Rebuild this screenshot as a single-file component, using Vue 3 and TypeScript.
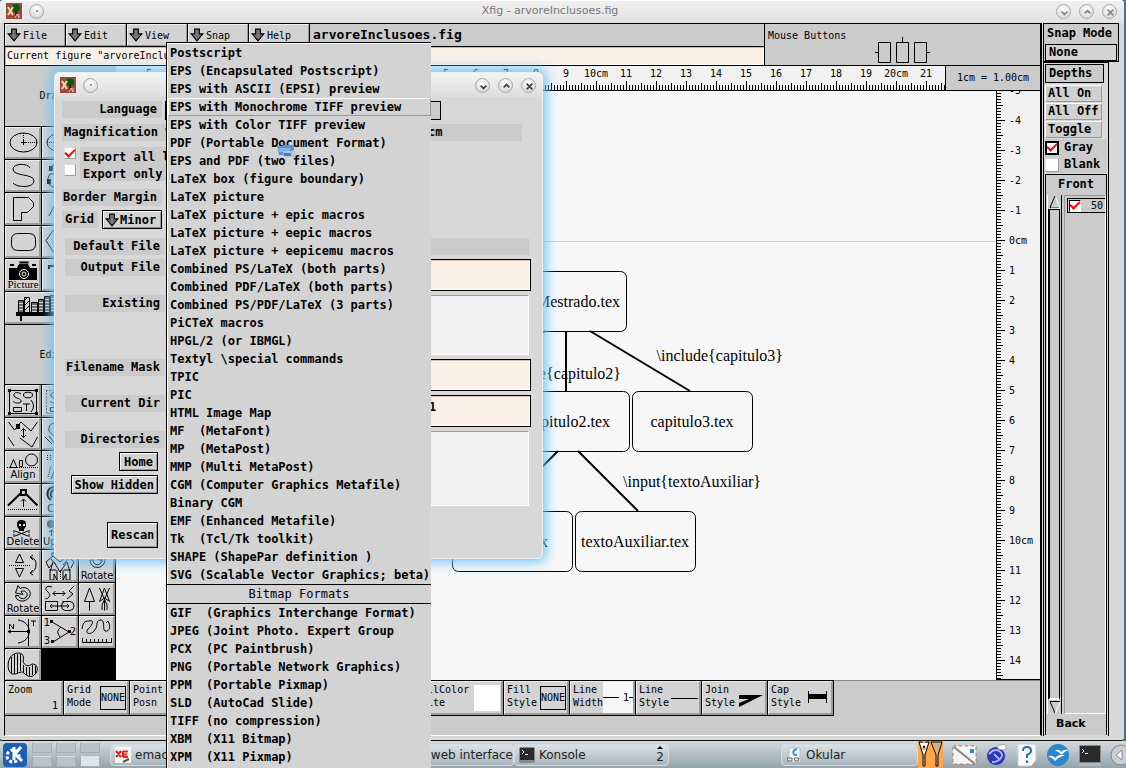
<script setup lang="ts">
import { ref } from 'vue'

interface Stroke { d: string; fill?: string; stroke?: string; dash?: string; w?: number }
interface Label { t: string; x: number; y: number; serif?: boolean; size?: number }
interface Tool { name: string; p: Stroke[]; l?: Label[]; wide?: boolean }

const menus = ['File', 'Edit', 'View', 'Snap', 'Help']

const vectorFormats = [
  'Postscript', 'EPS (Encapsulated Postscript)', 'EPS with ASCII (EPSI) preview',
  'EPS with Monochrome TIFF preview', 'EPS with Color TIFF preview',
  'PDF (Portable Document Format)', 'EPS and PDF (two files)', 'LaTeX box (figure boundary)',
  'LaTeX picture', 'LaTeX picture + epic macros', 'LaTeX picture + eepic macros',
  'LaTeX picture + eepicemu macros', 'Combined PS/LaTeX (both parts)',
  'Combined PDF/LaTeX (both parts)', 'Combined PS/PDF/LaTeX (3 parts)', 'PiCTeX macros',
  'HPGL/2 (or IBMGL)', 'Textyl \\special commands', 'TPIC', 'PIC', 'HTML Image Map',
  'MF  (MetaFont)', 'MP  (MetaPost)', 'MMP (Multi MetaPost)',
  'CGM (Computer Graphics Metafile)', 'Binary CGM', 'EMF (Enhanced Metafile)',
  'Tk  (Tcl/Tk toolkit)', 'SHAPE (ShapePar definition )', 'SVG (Scalable Vector Graphics; beta)',
]
const bitmapFormats = [
  'GIF  (Graphics Interchange Format)', 'JPEG (Joint Photo. Expert Group', 'PCX  (PC Paintbrush)',
  'PNG  (Portable Network Graphics)', 'PPM  (Portable Pixmap)', 'SLD  (AutoCad Slide)',
  'TIFF (no compression)', 'XBM  (X11 Bitmap)', 'XPM  (X11 Pixmap)',
]
const hovered = ref('EPS with Monochrome TIFF preview')

const drawTools: Tool[] = [
  { name: 'Ellipse by radius', p: [{ d: 'M5 15.5a13.5 9.5 0 1 0 27 0a13.5 9.5 0 1 0 -27 0' }, { d: 'M18.5 6V15.5H32', dash: '1 1' }, { d: 'M16 15.5H21M18.5 13V18' }] },
  { name: 'Ellipse by diameter', p: [{ d: 'M5 15.5a13.5 9.5 0 1 0 27 0a13.5 9.5 0 1 0 -27 0' }, { d: 'M5 15.5H32', dash: '1 1' }] },
  { name: 'Circle', p: [] },
  { name: 'Spline', p: [{ d: 'M25 8C23 3 8 3 8 9C8 17 29 13 29 21C29 28 12 28 8 23' }] },
  { name: 'Closed spline', p: [{ d: 'M8 8C12 2 20 4 24 8C28 14 12 14 8 14C4 20 6 26 12 27' }, { d: 'M7 6h4v5h-4zM5 19h4v5h-4z', fill: '#000' }] },
  { name: 'Interpolated spline', p: [] },
  { name: 'Polygon', p: [{ d: 'M8.5 4.5V27.5H16.5V19.5H22.5L28.5 13.5V9.5L23.5 4.5Z' }] },
  { name: 'Polyline', p: [{ d: 'M7 23L16 6L24 20L30 8' }] },
  { name: 'Box', p: [] },
  { name: 'Rounded box', p: [{ d: 'M12.5 7.5H24.5Q30.5 8 30.5 13.5V18.5Q30.5 24 24.5 24.5H12.5Q6.5 24 6.5 18.5V13.5Q6.5 8 12.5 7.5Z' }] },
  { name: 'Regular polygon', p: [{ d: 'M4 14.5L11 4.5H25L32 14.5L25 25.5H11Z' }] },
  { name: 'Arc', p: [] },
  { name: 'Picture', p: [{ d: 'M4 21V9H12L14 5H23L25 9H32V21ZM5 5h4v2h-4zM27 5h4v2h-4z', fill: '#000' }, { d: 'M14.5 3.5h9', w: 2 }, { d: 'M14.5 15a4.5 4.5 0 1 0 9 0a4.5 4.5 0 1 0 -9 0M17 15a2 2 0 1 0 4 0a2 2 0 1 0 -4 0', stroke: '#fff' }], l: [{ t: 'Picture', x: 18, y: 29, serif: true, size: 11 }] },
  { name: 'Text', p: [{ d: 'M7 10V7H26V10M16.5 7V24', w: 2 }] },
  { name: 'Dimension', p: [] },
  {
    name: 'Library', wide: true, p: [
      { d: 'M11 20h66v4h-66zM15 24h2v5h-2zM68 24h2v5h-2z', fill: '#000' },
      { d: 'M13.5 8.5h5v12h-5zM19.5 5.5h5v15h-5zM26.5 10.5h6v10h-6zM33.5 7.5h5v13h-5zM39.5 4.5h5v16h-5zM45.5 3.5h5v17h-5zM52.5 8.5h6v12h-6zM60.5 6.5h5v14h-5z' },
      { d: 'M15 9v12M17 9v12M27 11v10M29 11v10M31 11v10M35 8v13M37 8v13M41 5v15M43 5v15M47 4v16M49 4v16', w: 1, dash: '2 1' },
      { d: 'M20 18l4 -4M20 13l4 -4M20 8l3 -3' },
    ],
  },
]

const editTools: Tool[] = [
  { name: 'Compound', p: [{ d: 'M4.5 5.5H31.5V28.5H4.5Z' }, { d: 'M3 4h3v3h-3zM30 4h3v3h-3zM3 27h3v3h-3zM30 27h3v3h-3z', fill: '#000' }, { d: 'M16 9C12 6 8 8 9 11C11 14 17 13 16 17C14 19 9 18 8 16M18.5 10a4 2.5 0 1 0 9 0a4 2.5 0 1 0 -9 0M8.5 22.5h8v4h-8zM18 19h7M21.5 19v7M26 15q5 6 0 12' }] },
  { name: 'Open compound', p: [{ d: 'M4.5 5.5H31.5V28.5H4.5Z', dash: '1 2' }, { d: 'M16 9C12 6 8 8 9 11C11 14 17 13 16 17C14 19 9 18 8 16M8.5 22.5h8v4h-8z' }] },
  { name: 'Join', p: [] },
  { name: 'Move point', p: [{ d: 'M3.5 4L9.5 12L13 8L16 4L26 13L32.5 4M3 19L9 28M15 20L27 29L32.5 19M18.5 11V19M16 13L18.5 10.5L21 13M16 17L18.5 19.5L21 17' }, { d: 'M11 6h4v5h-4z', fill: '#000' }] },
  { name: 'Move', p: [{ d: 'M15 6C8 4 7 8 7 12C7 14 10 17 13 18M3 19L10 26M7 18L13 26' }] },
  { name: 'Copy objects', p: [] },
  { name: 'Align', p: [{ d: 'M5 16.5L8.5 8.5L12 16.5ZM14.5 9.5h3v6h-3zM20.5 9a6 6 0 1 0 12 0a6 6 0 1 0 -12 0' }, { d: 'M2 16.5H34', dash: '1 1' }], l: [{ t: 'Align', x: 18, y: 27 }] },
  { name: 'Move shape', p: [{ d: 'M5.5 4V10M8.5 4V10M6 26L9 15', dash: '1 1' }, { d: 'M9 28L14 16' }] },
  { name: 'Distribute', p: [] },
  { name: 'Add point', p: [{ d: 'M3 21.5L16 9M20 9L32.5 21.5M16 6h5v5h-5z', w: 2 }, { d: 'M18.5 15V23M16 17.5L18.5 15L21 17.5' }, { d: 'M3 25.5H33', dash: '1 1' }] },
  { name: 'Copy', p: [{ d: 'M12 3C4 4 4 13 9 16M12 6C8 7 8 12 10 14', w: 2 }], l: [{ t: 'Copy', x: 18, y: 28 }] },
  { name: 'Arrow', p: [] },
  { name: 'Delete', p: [{ d: 'M12 7q0 -4 4.5 -4t4.5 4q0 4 -2 5v2h-5v-2q-2 -1 -2 -5', fill: '#000' }, { d: 'M14 8h2M18 8h2', stroke: '#ddd', w: 2 }, { d: 'M10 14L23 19M23 14L10 19M9 13v3M24 13v3M9 17v3M24 17v3', w: 1 }], l: [{ t: 'Delete', x: 18, y: 28 }] },
  { name: 'Update', p: [{ d: 'M5 7a3 3 0 1 0 8 0a3 3 0 1 0 -8 0', fill: '#555' }, { d: 'M9.5 13V19M7 15L9.5 13L12 15' }], l: [{ t: 'Update', x: 19, y: 28 }] },
  { name: 'Text edit', p: [] },
  { name: 'Flip vertically', p: [{ d: 'M10.5 12.5L14.5 4L18.5 12.5ZM10.5 18.5L14.5 27L18.5 18.5Z' }, { d: 'M4 15.5H25', dash: '1 1' }, { d: 'M25 7Q32 9 31 15Q31 21 25 23M28 5L25 7L28 10M28 20L25 23L28 25' }] },
  { name: 'Flip horizontally', p: [{ d: 'M4 12L11 6L18 12L25 6L32 12L29 18M4 12L7 18L11 13M10 6V3h5v3M23 6V3h5v3M11 12L8 22V30H12V24L15 30V20M25 12L28 22V30H24V24L21 30V20M12 12L18 22L25 12M7 20H14M22 20H29M9 9l5 6M26 9l-5 6' }, { d: 'M18.5 20V31', dash: '1 1' }] },
  { name: 'Rotate clockwise', p: [{ d: 'M18 2.5C26 2 28 10 24 15C19 20 11 17 11 10L14 10C14 15 19 16 22 13C24 10 22 6 18 6.500' }, { d: 'M23 4V11L17 8' }], l: [{ t: 'Rotate', x: 18, y: 29 }] },
  { name: 'Rotate counter-clockwise', p: [{ d: 'M15 5.500C22 2 28 9 24 14.500C20 20 11 19 10.500 12.500H13.500C14 16 20 17 22 13C23 9 19 7 16 8.500L18 11.500L10.500 10L13 2.500Z' }], l: [{ t: 'Rotate', x: 18, y: 29 }] },
  { name: 'Convert', p: [{ d: 'M10 4C5 2 2 5 5 8C8 11 9 12 6 15C5 16 4 16 3 15M32 3L27 8L31 11L25 16M11 10.5H23M13.5 8L11 10.5L13.5 13M20.5 8L23 10.5L20.5 13M3.5 18.5H15.5V27.5H3.5ZM20.5 18.5H28Q32 19 32 23T28 27.5H23Q19.5 27 19.5 23T23 18.5M8 23H27M10 21L8 23L10 25M25 21L27 23L25 25' }] },
  { name: 'Arrow heads', p: [{ d: 'M5.5 18.5L10.5 5L15.5 18.5ZM10.5 18.5V27.5M20.5 18.5L25.5 5L30.5 18.5L25.5 15ZM20.5 5L28 22V27M30.5 5L23 22V27M25.5 15V27.5' }] },
  { name: 'Tangent', p: [{ d: 'M13 4C28 6 28 25 13 27M23.5 3V30M3 15.5H23M4.5 13V8L8.5 13V8M26 5H31M28.5 5V10M3 15.5L6 14M3 15.5L6 17' }, { d: 'M22 14h3v3h-3z', fill: '#000' }] },
  { name: 'Angle', p: [{ d: 'M10 6L27 16L11 26M19 11Q13 15 18 21' }, { d: 'M8 4h3v3h-3zM26 14h3v3h-3zM9 24h3v3h-3z', fill: '#000' }], l: [{ t: '1', x: 5, y: 10 }, { t: '2', x: 31, y: 19 }, { t: '3', x: 5, y: 28 }] },
  { name: 'Length', p: [{ d: 'M3 13C4 7 5 5 10 5C16 3 13 10 9 13C5 18 12 19 15 15C20 10 16 5 21 4C27 3 23 14 26 15C31 16 32 10 29 5L27 7M3.5 22V26.5H32.5V22M7.5 23V26M11.5 23V26M15.5 23V26M19.5 23V26M23.5 23V26M27.5 23V26' }] },
  { name: 'Area', p: [{ d: 'M7 25C1 22 2 8 9 5C16 2 20 6 18 12C19 17 24 18 27 15C32 15 33 19 32 22C29 30 22 28 19 24C16 21 12 26 7 25Z' }, { d: 'M6.5 8V24M9.5 5V25M12.5 5V24M15.5 5V22M18.5 16V23M21.5 18V26M24.5 18V27M27.5 16V26M30.5 17V25' }] },
]

function ticks(count: number, start: number, draw: (pos: number, len: number) => string): string {
  let d = ''
  for (let i = -count; i <= count; i++) {
    const len = i % 10 === 0 ? 9 : i % 5 === 0 ? 7 : 5
    d += draw(start + i * 3, len)
  }
  return d
}
const range = (a: number, b: number) => Array.from({ length: b - a + 1 }, (_, i) => a + i)
const cm = (n: number) => (n % 10 === 0 ? n + 'cm' : String(n))
const topTicks = ticks(600, 180, (x, l) => `M${x}.5 ${24 - l}V24`)
const sideTicks = ticks(400, 149, (y, l) => `M0 ${y}.5H${l}`)

const exportAll = ref(true)
const exportOnly = ref(false)
const gray = ref(true)
const blank = ref(false)
const depth50 = ref(true)
</script>

<template>
  <div class="desktop">
    <main class="window">
      <header class="titlebar">
        <svg class="appicon" viewBox="0 0 16 16"><rect width="16" height="16" fill="#9a4a3a" /><circle cx="10" cy="5" r="4" fill="#0a5a14" /><path d="M10 8v5" stroke="#321" stroke-width="2" /><path d="M2 4l5 8M7 4L2 12" stroke="#f3d9a0" stroke-width="2" /><path d="M9 15l2-4 2 4M13 11v4" stroke="#e8b8b8" fill="none" /></svg>
        <button class="orb" aria-label="Window menu"><i class="dot"></i></button>
        <h1>Xfig - arvoreInclusoes.fig</h1>
        <button v-for="(d, i) in ['M5 7L8 10L11 7', 'M5 9L8 6L11 9', 'M5 5L11 11M11 5L5 11']" :key="i" class="orb ctl" :aria-label="['Minimize', 'Maximize', 'Close'][i]">
          <svg viewBox="0 0 16 16"><path :d="d" /></svg>
        </button>
      </header>

      <div class="body">
        <section class="left">
          <div class="top">
            <div class="topleft">
              <nav class="menubar">
                <button v-for="m in menus" :key="m" class="raised">
                  <svg class="arrow" viewBox="0 0 12 12"><path d="M4 1H8V5H11L6 11L1 5H4Z" /></svg>{{ m }}
                </button>
                <span class="filename">arvoreInclusoes.fig</span>
              </nav>
              <div class="message">Current figure "arvoreInclusoes.fig"</div>
            </div>
            <div class="mouse">
              <span>Mouse Buttons</span>
              <svg width="57" height="26" viewBox="0 0 57 26"><path d="M4.500 5.500h12v20h-12zM22.500 5.500h12v20h-12zM40.500 5.500h12v20h-12zM28.500 0v5M1 15.500h3M53 15.500h3" /></svg>
            </div>
          </div>

          <div class="middle">
            <aside class="tools">
              <div class="heading drawing">Drawing</div>
              <div class="grid">
                <button v-for="t in drawTools" :key="t.name" class="tool raised" :class="{ wide: t.wide }" :aria-label="t.name">
                  <svg :width="t.wide ? 108 : 36" height="32">
                    <path v-for="(s, i) in t.p" :key="i" :d="s.d" :fill="s.fill || 'none'" :stroke="s.fill ? 'none' : s.stroke || '#000'" :stroke-dasharray="s.dash" :stroke-width="s.w || 1" />
                    <text v-for="l in t.l" :key="l.t" :x="l.x" :y="l.y" :class="{ serif: l.serif }" :font-size="l.size || 10" text-anchor="middle">{{ l.t }}</text>
                  </svg>
                </button>
              </div>
              <div class="heading editing">Editing</div>
              <div class="grid">
                <button v-for="t in editTools" :key="t.name" class="tool raised" :aria-label="t.name">
                  <svg width="36" height="32">
                    <path v-for="(s, i) in t.p" :key="i" :d="s.d" :fill="s.fill || 'none'" :stroke="s.fill ? 'none' : s.stroke || '#000'" :stroke-dasharray="s.dash" :stroke-width="s.w || 1" />
                    <text v-for="l in t.l" :key="l.t" :x="l.x" :y="l.y" :font-size="l.size || 10" text-anchor="middle">{{ l.t }}</text>
                  </svg>
                </button>
              </div>
            </aside>

            <div class="drawarea">
              <div class="rulerrow">
                <svg class="ruler">
                  <path :d="topTicks" />
                  <text v-for="n in range(-5, 21)" :key="n" :x="180 + n * 30" y="11" text-anchor="middle">{{ cm(n) }}</text>
                </svg>
                <div class="unit">1cm = 1.00cm</div>
              </div>
              <div class="canvasrow">
                <svg class="canvas">
                  <g transform="translate(-116 -91)">
                    <path d="M116 241.500H4000" class="axis" />
                    <g class="boxes">
                      <rect x="506.500" y="271.500" width="120" height="60" rx="6" />
                      <rect x="509.500" y="391.500" width="120" height="60" rx="6" />
                      <rect x="632.500" y="391.500" width="120" height="60" rx="6" />
                      <rect x="452.500" y="511.500" width="120" height="60" rx="6" />
                      <rect x="575.500" y="511.500" width="120" height="60" rx="6" />
                    </g>
                    <path class="edges" d="M566 331V391M590 331L690 391M545 331L445 391M558 451L498 511M578 451L638 511" />
                    <text x="620" y="307" text-anchor="end">Mestrado.tex</text>
                    <text x="783" y="361" text-anchor="end">\include{capitulo3}</text>
                    <text x="621" y="379" text-anchor="end">\include{capitulo2}</text>
                    <text x="610" y="427" text-anchor="end">capitulo2.tex</text>
                    <text x="692" y="427" text-anchor="middle">capitulo3.tex</text>
                    <text x="761" y="487" text-anchor="end">\input{textoAuxiliar}</text>
                    <text x="548" y="547" text-anchor="end">texto.tex</text>
                    <text x="635" y="547" text-anchor="middle">textoAuxiliar.tex</text>
                  </g>
                </svg>
                <svg class="side">
                  <path :d="sideTicks + 'M0.5 0V4000'" />
                  <text v-for="n in range(-5, 14)" :key="n" x="13" :y="153 + n * 30">{{ cm(n) }}</text>
                </svg>
              </div>
            </div>
          </div>

          <footer class="indicators">
            <button class="ind zoom raised"><span>Zoom</span><span class="val">1</span></button>
            <button class="ind raised"><span>Grid<br />Mode</span><b class="none">NONE</b></button>
            <button class="ind raised"><span>Point<br />Posn</span><svg width="26" height="26"><path d="M2 2.500h6M2 6.500h4M2 10.500h4M2 14.500h4M2 18.500h4M2 22.500h6M1.500 2v22" /></svg></button>
            <div class="fill"></div>
            <button class="ind color raised"><span>FillColor<br />White</span><i class="swatch"></i></button>
            <button class="ind raised"><span>Fill<br />Style</span><b class="none">NONE</b></button>
            <button class="ind raised"><span>Line<br />Width</span><span class="lw"><i></i>1<i></i></span></button>
            <button class="ind raised"><span>Line<br />Style</span><svg width="27" height="26"><path d="M0 13.500H27" /></svg></button>
            <button class="ind raised"><span>Join<br />Style</span><svg width="27" height="26"><path class="solid" d="M2 10H26L2 22V18L12 14H2Z" /></svg></button>
            <button class="ind raised"><span>Cap<br />Style</span><svg width="24" height="26"><path d="M2.500 6v12M20.500 6v12" /><path class="solid" d="M3 9h17v5H3z" /></svg></button>
          </footer>
        </section>

        <aside class="right">
          <div class="snap">
            <span>Snap Mode</span>
            <button>None</button>
          </div>
          <div class="depths">
            <button class="framed">Depths</button>
            <button class="flat">All On</button>
            <button class="flat">All Off</button>
            <button class="flat">Toggle</button>
            <label class="chk"><input v-model="gray" type="checkbox" class="box on" />Gray</label>
            <label class="chk"><input v-model="blank" type="checkbox" class="box" />Blank</label>
            <div class="stack">
              <div class="front">Front</div>
              <div class="lists">
                <div class="scroll">
                  <svg width="12" height="14"><path d="M6 1L1 12.500H11" /><path class="light" d="M6.500 2L11 13H2" /></svg>
                  <div class="trough"></div>
                  <svg width="12" height="14"><path d="M11 1.500H1L6 13" /><path class="light" d="M6.500 13L11 2" /></svg>
                </div>
                <div class="list"><label><input v-model="depth50" type="checkbox" class="box small" />50</label></div>
              </div>
              <div class="back">Back</div>
            </div>
          </div>
        </aside>
      </div>
    </main>

    <footer class="taskbar">
      <button class="kde" aria-label="Application launcher"><svg width="24" height="24" viewBox="0 0 24 24"><rect width="24" height="24" rx="4" fill="#1e5fb4" /><circle cx="10" cy="13" r="6" fill="none" stroke="#fff" stroke-width="3" stroke-dasharray="3 2" /><path d="M11 4V17M18 4L12 11L19 18" fill="none" stroke="#fff" stroke-width="3" /></svg></button>
      <div class="pager"><i v-for="n in 6" :key="n" :class="{ cur: n === 6 }"></i></div>
      <button class="task emacs"><svg width="16" height="16"><rect width="16" height="16" fill="#f4f4f0" /><path d="M1 4l5 6M6 4L1 10M8 4v6M8 4.500h5M8 7.500h4M8 10h5" stroke="#d22" stroke-width="2" /><path d="M8 15l6-3" stroke="#555" stroke-width="2" /></svg>emacs</button>
      <button class="task web">SVN web interface</button>
      <button class="task konsole"><svg width="16" height="16"><rect width="16" height="16" rx="2" fill="#888" /><rect x="1" y="1" width="14" height="12" fill="#2b2b2b" /><path d="M3 3l2 2-2 2M6 7.500h3" stroke="#fff" fill="none" /></svg>Konsole<span class="count"><svg width="6" height="3"><path d="M0 3L3 0L6 3Z" /></svg>2</span></button>
      <button class="task okular"><svg width="16" height="16"><path d="M3 1h11v14H3z" fill="#fafafa" stroke="#bbb" /><path d="M11 2C6 3 6 8 11 8" stroke="#28a0e0" stroke-width="2" fill="none" /><path d="M1 11h5v3H2zM8 11h5l-1 3H9z" stroke="#666" fill="#eee" /></svg>Okular</button>
      <div class="tray">
        <button aria-label="Xfig"><svg width="25" height="27"><rect width="25" height="27" fill="#ffa64d" /><path d="M1 1h3l2 6 2-6h3L7 14V25H5V14ZM13 1h11L20 14V25H18V14Z" fill="#d8b080" stroke="#111" /><path d="M2 2l2 5 2-3 2 3 2-5zM4 9l2 4 2-4z" fill="#fff" /></svg></button>
        <button aria-label="Mail"><svg width="25" height="25"><rect x="1" y="4" width="23" height="18" fill="#f6f6f8" stroke="#c66" stroke-dasharray="3 3" /><path d="M2 5L23 22" stroke="#888" stroke-width="2" /><path d="M18 7h4v4h-4z" fill="#38c" /></svg></button>
        <button aria-label="Browser"><svg width="22" height="25"><circle cx="10" cy="14" r="9" fill="#2a35b8" /><path d="M3 12Q8 6 13 9T15 16T6 20M8 12l5 5" stroke="#a9b8ff" stroke-width="2" fill="none" /><path d="M11 5q2-3 5-2q3-2 4 1q1 4-3 4q-5 0-6-3" fill="#fff" stroke="#99a" /></svg></button>
        <button aria-label="Help"><svg width="20" height="24"><path d="M1 1h18v16l-5 6H1z" fill="#f8f8f8" stroke="#ccc" /><path d="M6 8Q6 4 10 4T14 8Q14 10 10 12V15M10 17.500V20" stroke="#1d6fc0" stroke-width="2" fill="none" /></svg></button>
        <button aria-label="OpenOffice"><svg width="24" height="24"><circle cx="12" cy="12" r="11" fill="#2f86cc" /><path d="M2 14Q6 11 9 15Q13 11 19 12Q13 14 9 18Q6 14 2 14M9 8Q13 5 15 9Q18 6 22 7Q18 9 15 12Q13 8 9 8" fill="#fff" /></svg></button>
        <button aria-label="Terminal"><svg width="22" height="22"><rect x="0.500" y="1.500" width="21" height="17" fill="#2a2a2a" stroke="#888" /><path d="M3 5l2 2-2 2M6 9.500h3" stroke="#eee" fill="none" /><path d="M0 20.500h22" stroke="#bbb" stroke-width="2" /></svg></button>
        <button aria-label="Show hidden icons"><svg width="16" height="22"><circle cx="11" cy="11" r="10" fill="#c8ced2" stroke="#888" /><path d="M12 6v10L6 11z" fill="#fff" stroke="#888" /></svg></button>
      </div>
    </footer>

    <section class="dialog" aria-label="Export">
      <header class="titlebar">
        <svg class="appicon" viewBox="0 0 16 16"><rect width="16" height="16" fill="#9a4a3a" /><circle cx="10" cy="5" r="4" fill="#0a5a14" /><path d="M10 8v5" stroke="#321" stroke-width="2" /><path d="M2 4l5 8M7 4L2 12" stroke="#f3d9a0" stroke-width="2" /><path d="M9 15l2-4 2 4M13 11v4" stroke="#e8b8b8" fill="none" /></svg>
        <button class="orb" aria-label="Window menu"><i class="dot"></i></button>
        <span class="grow"></span>
        <button v-for="(d, i) in ['M5 7L8 10L11 7', 'M5 9L8 6L11 9', 'M5 5L11 11M11 5L5 11']" :key="i" class="orb ctl dark" :aria-label="['Minimize', 'Maximize', 'Close'][i]">
          <svg viewBox="0 0 16 16"><path :d="d" /></svg>
        </button>
      </header>
      <div class="form">
        <div class="row lang"><span class="lab">Language</span><button class="langbtn" aria-label="Language"></button></div>
        <div class="row mag"><span class="lab">Magnification %</span><span class="bar cmbar">cm</span></div>
        <div class="row exp">
          <div class="checks">
            <label><input v-model="exportAll" type="checkbox" class="box" /><span>Export all layers</span></label>
            <label><input v-model="exportOnly" type="checkbox" class="box" /><span>Export only active</span></label>
          </div>
          <span class="bar short"></span>
        </div>
        <div class="row margin"><span class="lab">Border Margin</span></div>
        <div class="row gridrow"><span class="lab">Grid</span><button class="btn minor"><svg class="arrow" viewBox="0 0 12 12"><path d="M4 1H8V5H11L6 11L1 5H4Z" /></svg>Minor</button></div>
        <div class="row def"><span class="lab">Default File</span><span class="bar"></span></div>
        <div class="row"><label class="lab" for="out">Output File</label><input id="out" class="field" /></div>
        <div class="row"><span class="lab">Existing</span><div class="listbox exist"></div></div>
        <div class="row"><label class="lab" for="mask">Filename Mask</label><input id="mask" class="field" /></div>
        <div class="row"><label class="lab" for="dir">Current Dir</label><input id="dir" class="field dirfield" value="1" /></div>
        <div class="row">
          <div class="dirs"><span class="lab">Directories</span><button class="btn home">Home</button><button class="btn">Show Hidden</button></div>
          <div class="listbox dirlist"></div>
        </div>
        <button class="btn rescan">Rescan</button>
      </div>
    </section>

    <div class="popup" role="menu">
      <button v-for="f in vectorFormats" :key="f" role="menuitem" :class="{ hot: f === hovered }" @mouseenter="hovered = f">{{ f }}</button>
      <div class="group">Bitmap Formats</div>
      <button v-for="f in bitmapFormats" :key="f" role="menuitem" :class="{ hot: f === hovered }" @mouseenter="hovered = f">{{ f }}</button>
      <svg class="busy" width="18" height="14"><path d="M0 2h6v-1h11v4l-3 6H2z" fill="#5a92d6" /><path d="M1 4h13l-3 4H2z" fill="#86b2e6" /><path d="M6 7h12v6H7z" fill="#b9c3cf" /><path d="M7 9h7v3H7z" fill="#3c7ccc" /></svg>
    </div>
  </div>
</template>

<style>
body { margin: 0; background: #4f6f7c; }
</style>

<style scoped>
* { box-sizing: border-box; }
.desktop { position: relative; min-height: 100vh; height: 100vh; display: flex; flex-direction: column; overflow: hidden; font: 10px/13px "DejaVu Sans Mono", monospace; color: #000; }
button { font: inherit; color: inherit; border: 0; padding: 0; margin: 0; background: none; text-align: left; }
svg { display: block; flex: none; }
.window { flex: 1; min-height: 0; display: flex; flex-direction: column; margin-right: 2px; background: #d8d8d6; border-radius: 4px 4px 3px 3px; border-bottom: 1px solid #111; }
.titlebar { height: 23px; flex: none; display: flex; align-items: center; gap: 7px; padding: 0 7px 2px 6px; background: linear-gradient(#f0f0f0, #e2e2e2); border-top: 1px solid #fff; border-radius: 4px 4px 0 0; }
.titlebar h1 { flex: 1; margin: 0; text-align: center; font: 11px/16px "DejaVu Sans", sans-serif; color: #777; }
.appicon { width: 16px; height: 16px; }
.orb { width: 15px; height: 15px; border-radius: 50%; background: radial-gradient(circle at 50% 30%, #fff, #d0d0d0); border: 1px solid #a8a8a8; display: grid; place-items: center; }
.orb svg { width: 15px; height: 15px; fill: none; stroke: #888; stroke-width: 2; }
.dark svg { stroke: #444; }
.ctl + .ctl { margin-left: 1px; }
.dot { width: 2px; height: 2px; background: #999; }
.grow { flex: 1; }

.body { flex: 1; min-height: 0; display: flex; margin: 0 5px 4px 4px; background: #d8d8d8; }
.left { flex: 1; min-width: 0; display: flex; flex-direction: column; background: #cbcbcb; border: 1px solid #000; border-right-width: 2px; border-bottom: 1px solid #fff; }
.raised { background: #d3d3d3; border: 2px solid; border-color: #efefef #9b9b9b #9b9b9b #efefef; }
.top { display: flex; flex: none; height: 42px; border-bottom: 1px solid #000; }
.topleft { flex: 1; min-width: 0; display: flex; flex-direction: column; }
.menubar { height: 23px; display: flex; border-bottom: 1px solid #000; }
.menubar button { width: 60px; display: flex; align-items: center; gap: 2px; border-width: 1px; box-shadow: 1px 0 #000; margin-right: 1px; padding-left: 2px; }
.arrow { width: 14px; height: 14px; stroke: #000; fill: #777; }
.menubar .arrow { margin-left: -1px; }
.filename { padding-left: 3px; font-size: 13px; font-weight: bold; line-height: 22px; }
.message { flex: 1; background: #faf0e6; border: 1px solid; border-color: #c9b8ad #fff #fff #c9b8ad; padding-left: 1px; line-height: 16px; white-space: nowrap; overflow: hidden; }
.mouse { width: 276px; display: flex; gap: 28px; border-left: 1px solid #000; padding: 5px 3px 2px; }
.mouse svg { align-self: flex-end; fill: none; stroke: #000; }

.middle { flex: 1; min-height: 0; display: flex; border-bottom: 1px solid #888; }
.tools { width: 111px; flex: none; display: flex; flex-direction: column; }
.heading { text-align: center; border-bottom: 1px solid #000; flex: none; }
.drawing { height: 61px; line-height: 60px; }
.editing { height: 60px; line-height: 60px; }
.grid { display: grid; grid-template-columns: repeat(3, 36px); grid-auto-rows: 32px; gap: 1px; padding: 0 1px 1px 0; background: #000; flex: none; }
.tool { overflow: hidden; border-width: 1px 2px 2px 1px; }
.tool svg { margin: -1px; }
.wide { grid-column: span 3; }
.tool text { font-family: "DejaVu Sans", sans-serif; }
.tool text.serif { font-family: "Liberation Serif", serif; }
.drawarea { flex: 1; min-width: 0; display: flex; flex-direction: column; }
.rulerrow { display: flex; height: 25px; flex: none; border-bottom: 1px solid #000; }
.ruler { flex: 1; min-width: 0; height: 24px; background: #f1f1f1; stroke: #000; }
.ruler text, .side text { stroke: none; fill: #000; }
.unit { width: 95px; border-left: 1px solid #000; text-align: center; line-height: 24px; }
.canvasrow { flex: 1; min-height: 0; display: flex; }
.canvas { flex: 1; min-width: 0; height: auto; background: #f7f7f7; font: 16px "Liberation Serif", serif; }
.axis { stroke: #add8e6; }
.boxes { fill: none; stroke: #000; }
.edges { fill: none; stroke: #000; stroke-width: 2; }
.side { width: 44px; height: auto; background: #f1f1f1; stroke: #000; fill: none; border-bottom: 1px solid #000; }

.indicators { height: 54px; flex: none; display: flex; }
.ind { width: 65px; height: 34px; flex: none; display: flex; align-items: flex-start; justify-content: space-between; margin-right: 1px; padding: 1px 1px 1px 2px; border-width: 1px 2px 2px 1px; outline: 1px solid #000; font: 10px/13px "DejaVu Sans Mono", monospace; }
.ind svg { margin-top: 2px; fill: none; stroke: #000; }
.ind .solid { fill: #000; stroke: none; }
.zoom { width: 58px; }
.val { align-self: flex-end; padding-right: 2px; }
.none { width: 26px; height: 24px; margin-top: 3px; border: 1px solid #000; font: 10px/22px "DejaVu Sans Mono", monospace; text-align: center; }
.fill { width: 216px; flex: none; }
.color { width: 91px; }
.swatch { width: 26px; height: 26px; margin-top: 2px; background: #fff; }
.lw { display: flex; align-items: center; height: 31px; width: 30px; margin: -1px -1px 0 0; background: #f7f7f7; }
.lw i { flex: 1; height: 1px; background: #000; margin-right: 4px; }
.lw i:last-child { flex: 0 0 4px; margin: 0; }

.right { width: 76px; flex: none; display: flex; flex-direction: column; align-items: flex-start; font: bold 12px/15px "DejaVu Sans Mono", monospace; margin-left: 1px; }
.snap { width: 76px; height: 39px; flex: none; border: 1px solid #000; padding: 2px 1px 0; background: #cbcbcb; display: flex; flex-direction: column; gap: 2px; }
.snap span { padding-left: 2px; height: 16px; white-space: nowrap; }
.snap button { height: 18px; border: 1px solid #000; background: #d3d3d3; padding-left: 3px; }
.depths { flex: 1; min-height: 0; width: 66px; border: solid #000; border-width: 1px 1px 0 1px; padding: 1px; background: #d8d8d8; display: flex; flex-direction: column; }
.framed { height: 19px; width: 59px; border: 1px solid #000; padding-left: 3px; margin-bottom: 2px; background: #cbcbcb; }
.flat { width: 57px; height: 17px; margin: 0 0 1px; padding-left: 2px; border: 1px solid; border-color: #fff #999 #999 #fff; background: #d0d0d0; white-space: nowrap; }
.chk { height: 17px; display: flex; align-items: center; gap: 5px; background: #cbcbcb; }
.box { appearance: none; width: 14px; height: 14px; margin: 0; background: #fff; border: 1px solid; border-color: #ddd #999 #999 #ddd; display: grid; place-items: center; flex: none; }
.box:checked::after { content: ""; width: 8px; height: 4px; border: solid red; border-width: 0 0 2px 2px; transform: rotate(-45deg); margin-top: -3px; }
.box.on { border: 2px solid #000; }
.box.small { width: 12px; height: 12px; border-color: #000 #fff #fff #000; }
.stack { flex: 1; min-height: 0; margin-top: 1px; border: 1px solid #000; border-bottom: 0; display: flex; flex-direction: column; background: #cbcbcb; }
.front { height: 20px; line-height: 19px; text-align: center; }
.lists { flex: 1; min-height: 0; display: flex; gap: 2px; padding-left: 1px; }
.scroll { width: 15px; display: flex; flex-direction: column; align-items: center; border-left: 1px solid #fff; border-right: 1px solid #000; }
.scroll svg { fill: none; stroke: #000; }
.scroll .light { stroke: #fff; }
.trough { flex: 1; align-self: stretch; border: solid #000; border-width: 1px 1px 0 2px; border-bottom: 2px solid #fff; margin-right: 1px; background: #cbcbcb; }
.list { flex: 1; border: 1px solid; border-color: #999 #fff #fff #999; padding: 2px 0 0 2px; }
.list label { height: 15px; display: flex; align-items: center; justify-content: space-between; border: 1px solid #000; border-right: 0; padding: 0 2px 0 1px; font: 10px/13px "DejaVu Sans Mono", monospace; }
.back { height: 21px; line-height: 20px; padding-left: 10px; font-family: "DejaVu Sans", sans-serif; font-size: 11px; }

.taskbar { height: 27px; flex: none; display: flex; align-items: center; padding-left: 3px; background: linear-gradient(#d3dade, #93a4ac); font: 12px/16px "DejaVu Sans", sans-serif; color: #222; overflow: hidden; }
.pager { display: grid; grid-template-columns: repeat(3, 20px); grid-auto-rows: 11px; gap: 3px 4px; margin: 0 10px 0 5px; }
.pager i { background: #b8c2c8; border: 1px solid #a2adb3; border-top-color: #d8dfe3; }
.pager .cur { background: #dfe4e7; }
.task { height: 22px; flex: none; display: flex; align-items: center; gap: 4px; padding: 0 4px; border: 1px solid #d5dce0; border-radius: 4px; background: linear-gradient(#dbe1e4, #a9b6bd); overflow: hidden; white-space: nowrap; }
.emacs { width: 200px; }
.web { width: 204px; justify-content: flex-end; padding-right: 0; }
.konsole { width: 155px; }
.count { margin-left: auto; line-height: 12px; display: flex; flex-direction: column; align-items: center; gap: 2px; }
.okular { width: 137px; margin-left: auto; }
.tray { display: flex; align-items: center; gap: 9px; }

.dialog { position: absolute; left: 54px; top: 72px; width: 489px; height: 487px; background: #d8d8d8; border: 1px solid #eee; border-radius: 5px; box-shadow: 0 0 12px 3px #6cc4f8; }
.dialog .titlebar { height: 24px; padding: 0 6px 0 5px; border: 0; background: linear-gradient(#f4f4f4, #ddd); }
.form { padding: 4px 13px 0 7px; font: bold 12px/17px "DejaVu Sans Mono", monospace; }
.row { display: flex; align-items: flex-start; gap: 3px; margin-bottom: 4px; }
.lab { width: 100px; height: 17px; flex: none; padding-right: 5px; background: #cbcbcb; text-align: right; white-space: nowrap; overflow: hidden; margin-left: 3px; }
.bar { flex: 1; height: 17px; background: #cbcbcb; }
.lang .lab, .margin .lab { margin-left: 0; }
.langbtn { width: 276px; height: 19px; border: 1px solid #000; background: #cbcbcb; }
.mag .lab { width: 110px; margin-left: 0; text-align: left; padding-left: 2px; padding-right: 0; }
.cmbar { padding-left: 253px; margin-right: 7px; }
.exp { margin: 0 0 8px; padding-top: 2px; align-items: flex-end; }
.checks { width: 250px; }
.checks label { display: flex; height: 17px; gap: 4px; padding-left: 2px; }
.checks span { background: #cbcbcb; flex: 1; padding-left: 3px; line-height: 21px; height: 17px; }
.checks .box { width: 12px; height: 12px; }
.short { flex: 0 0 115px; }
.margin { margin-bottom: 4px; }
.gridrow { margin-bottom: 9px; align-items: center; }
.gridrow .lab { width: 36px; text-align: left; padding-left: 3px; margin-left: 0; margin-right: 1px; }
.field { flex: 1; height: 32px; min-width: 0; border: 1px solid #000; background: #faf0e6; box-shadow: inset 0 1px #d0c0b0, inset -1px -1px #fff; padding: 0 4px; font: inherit; margin: 0 -2px 0 0; }
.dirfield { padding: 0 0 8px 260px; }
.listbox { flex: 1; background: #f1f1f1; border: 1px solid; border-color: #999 #fff #fff #999; }
.exist { height: 60px; }
.dirlist { height: 75px; }
.btn { height: 19px; border: 1px solid #000; background: #d3d3d3; box-shadow: inset 1px 1px #fff, inset -1px -1px #999; padding: 0 3px; font: bold 12px/16px "DejaVu Sans Mono", monospace; }
.minor { display: flex; align-items: center; gap: 1px; width: 60px; padding-left: 2px; white-space: nowrap; }
.dirs { display: flex; flex-direction: column; align-items: flex-end; gap: 4px; width: 103px; flex: none; }
.dirs .btn { margin-right: 7px; white-space: nowrap; flex: none; }
.dirs .home { padding: 0 4px; }
.rescan { height: 26px; margin: 12px 0 0 45px; }

.popup { position: absolute; left: 166px; top: 42px; width: 265px; height: 726px; padding-top: 1px; border: solid #000; border-width: 1px 0 0 1px; background: #d3d3d3; box-shadow: inset 1px 1px #fff; overflow: hidden; font: bold 12px/16px "DejaVu Sans Mono", monospace; display: flex; flex-direction: column; }
.popup button { height: 18px; flex: none; margin-left: 1px; padding-left: 1px; border: 1px solid transparent; white-space: pre; }
.popup .hot { border-color: #fff #999 #999 #fff; }
.group { height: 20px; flex: none; border: solid #000; border-width: 1px 0; text-align: center; font: 12px/18px "DejaVu Sans Mono", monospace; }
.busy { position: absolute; left: 110px; top: 101px; }
</style>
